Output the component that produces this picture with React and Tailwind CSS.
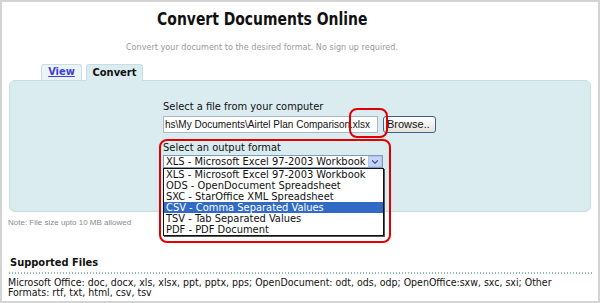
import { ChevronDown } from 'lucide-react';

const options = [
  'XLS - Microsoft Excel 97-2003 Workbook',
  'ODS - OpenDocument Spreadsheet',
  'SXC - StarOffice XML Spreadsheet',
  'CSV - Comma Separated Values',
  'TSV - Tab Separated Values',
  'PDF - PDF Document',
];

const ui = { fontFamily: '"DejaVu Sans Condensed", "DejaVu Sans", sans-serif' };
const arial = { fontFamily: '"Liberation Sans", Arial, sans-serif' };

export default function App() {
  return (
    <div className="w-[600px] h-[303px] bg-white border-2 border-[#d4d4d4] flex flex-col overflow-hidden" style={ui}>
      <div className="pr-[76px] flex flex-col items-center">
        <h1 className="text-[18px] leading-[26px] font-bold text-[#111] mt-[4px] scale-x-[0.86] whitespace-nowrap">
          Convert Documents Online
        </h1>
        <p className="text-[9px] leading-[12px] text-[#9a9a9a] mt-[9px] whitespace-nowrap">
          Convert your document to the desired format. No sign up required.
        </p>
      </div>

      <div className="flex gap-[4px] ml-[39px] mt-[10px] h-[17px] items-end">
        <div className="h-[16px] w-[41px] bg-[#edf4f5] border border-b-0 border-[#c6dde1] rounded-t-[3px] text-[11px] leading-[14px] text-center text-[#4040d8] underline font-bold">
          View
        </div>
        <div className="h-[17px] w-[57px] bg-[#daecef] border border-b-0 border-[#c6dde1] rounded-t-[3px] text-[11px] leading-[15px] text-center font-bold text-[#111] relative z-10 -mb-px">
          Convert
        </div>
      </div>

      <div className="relative mx-[7px] h-[132px] bg-[#daecef] border border-[#c6dde1] rounded-[6px] pl-[153px] pt-[19px]">
        <div className="text-[11px] leading-[13px] text-[#111]">Select a file from your computer</div>
        <div className="flex gap-[5px] mt-[3px]">
          <div className="w-[215px] h-[17px] bg-white border border-[#a9b7c3] text-[10px] leading-[15px] pl-[1px] overflow-hidden whitespace-nowrap text-[#111]" style={arial}>
            hs\My Documents\Airtel Plan Comparison.xlsx
          </div>
          <div className="w-[53px] h-[17px] rounded-[3px] border border-[#3f5f8c] bg-gradient-to-b from-white to-[#e6e3da] text-[11px] leading-[15px] pl-[3px] text-[#111]" style={arial}>
            Browse..
          </div>
        </div>
        <div className="text-[11px] leading-[13px] text-[#111] mt-[8px]">Select an output format</div>
        <div className="relative w-[220px] mt-[1px]">
          <div className="h-[13px] border border-[#7f9db9] bg-white flex items-center pr-[16px] text-[11px] leading-[11px] pl-[2px] text-[#111] whitespace-nowrap">
            {options[0]}
            <span className="absolute right-[1px] top-[1px] w-[14px] h-[11px] bg-[#c3d4f7] border border-[#b0c4ec] flex items-center justify-center">
              <ChevronDown size={10} strokeWidth={3} className="text-[#4d6185]" />
            </span>
          </div>
          <div className="absolute left-0 top-[13px] w-[221px] bg-white border border-[#111] shadow-[1px_1px_0_#555] z-20">
            {options.map((o, i) => (
              <div
                key={o}
                className={`h-[11px] text-[11px] leading-[11px] pl-[2px] whitespace-nowrap ${i === 3 ? 'bg-[#316ac5] text-white' : 'text-[#111]'}`}
              >
                {o}
              </div>
            ))}
          </div>
        </div>

        <div className="absolute left-[339px] top-[27px] w-[39px] h-[30px] border-2 border-[#e00000] rounded-[8px] z-30" />
        <div className="absolute left-[149px] top-[58px] w-[232px] h-[104px] border-2 border-[#e00000] rounded-[8px] z-30" />
      </div>

      <div className="text-[8px] leading-[10px] text-[#8a8a8a] ml-[6px] mt-[6px]" style={arial}>
        Note: File size upto 10 MB allowed
      </div>

      <div className="mx-[6px] mt-[28px]">
        <div className="text-[11px] leading-[13px] font-bold text-[#111] pl-[2px]">Supported Files</div>
        <div className="mt-[3px] h-[2px] bg-[radial-gradient(circle,#8fbcbe_0.8px,transparent_1px)] bg-[length:3px_2px]" />
        <div className="mt-[3px] text-[10.5px] text-[#111]">
          <div className="h-[10px] leading-[10px] whitespace-nowrap">
            Microsoft Office: doc, docx, xls, xlsx, ppt, pptx, pps; OpenDocument: odt, ods, odp; OpenOffice:sxw, sxc, sxi; Other
          </div>
          <div className="h-[10px] leading-[10px]">Formats: rtf, txt, html, csv, tsv</div>
        </div>
      </div>
    </div>
  );
}
